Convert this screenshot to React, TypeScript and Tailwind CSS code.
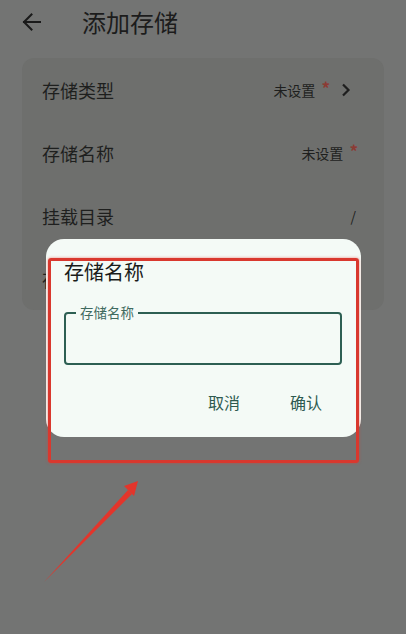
import React from "react";

const font = { fontFamily: '"Noto Sans CJK SC", "Noto Sans", sans-serif' };

function Row({ label, right }: { label: string; right: React.ReactNode }) {
  return (
    <div className="flex h-[63px] items-center justify-between pl-[20px] pr-[26px]">
      <span className="text-[18px] leading-none text-[#1e1f1e]">{label}</span>
      <div className="flex items-center">{right}</div>
    </div>
  );
}

function Star() {
  return <span className="ml-[6px] -mt-[4px] text-[17px] font-bold leading-none text-[#8c3b34]">*</span>;
}

export default function App() {
  return (
    <div style={font} className="relative h-[634px] w-[406px] overflow-hidden bg-[#737473]">
      {/* header */}
      <div className="flex h-[44px] items-center">
        <svg className="ml-[22px]" width="20" height="20" viewBox="0 0 20 20" fill="none" stroke="#1a1a1a" strokeWidth="2" strokeLinecap="square">
          <path d="M2 10 H18" />
          <path d="M9.5 2.5 L2 10 L9.5 17.5" />
        </svg>
        <span className="ml-[40px] text-[24px] leading-none text-[#1c1c1c]">添加存储</span>
      </div>

      {/* card */}
      <div className="mx-[22px] mt-[14px] rounded-[12px] bg-[#6e6f6d]">
        <Row
          label="存储类型"
          right={
            <>
              <span className="text-[14px] leading-none text-[#1e1f1e]">未设置</span>
              <Star />
              <svg className="ml-[11px]" width="17" height="16" viewBox="0 0 17 16" fill="none" stroke="#1e1e1e" strokeWidth="2.2">
                <path d="M2 2.5 L7.5 8 L2 13.5" />
              </svg>
            </>
          }
        />
        <Row
          label="存储名称"
          right={
            <>
              <span className="text-[14px] leading-none text-[#1e1f1e]">未设置</span>
              <Star />
            </>
          }
        />
        <Row label="挂载目录" right={<span className="mr-[2px] text-[14px] leading-none text-[#1e1f1e]">/</span>} />
        <Row label="存储顺序" right={<span className="text-[14px] leading-none text-[#1e1f1e]">0</span>} />
      </div>

      {/* dialog */}
      <div className="absolute left-[46px] top-[239px] h-[198px] w-[315px] rounded-[18px] bg-[#f4faf6] px-[18px] pt-[23px]">
        <div className="text-[20px] leading-none text-[#1a1c1b]">存储名称</div>
        <div className="relative mt-[30px] h-[53px] w-[278px] rounded-[4px] border-2 border-[#2d5f53]">
          <span className="absolute left-[10px] top-[-10px] bg-[#f4faf6] px-[4px] text-[13.5px] leading-[16px] text-[#3f6a5f]">
            存储名称
          </span>
        </div>
        <div className="mt-[29px] flex justify-end pr-[21px] text-[16px] leading-none text-[#2e5a50]">
          <span>取消</span>
          <span className="ml-[50px]">确认</span>
        </div>
      </div>

      {/* annotation */}
      <div className="absolute left-[48px] top-[258px] h-[205px] w-[311px] rounded-[3px] border-[3px] border-[#d9382e] shadow-[0_0_3px_rgba(230,60,50,0.6)]" />
      <svg className="absolute left-0 top-0" width="406" height="634" viewBox="0 0 406 634">
        <polygon points="44,582 128,490 132,494" fill="#e3352b" />
        <polygon points="138,481 124,486 134,496" fill="#e3352b" />
      </svg>
    </div>
  );
}
